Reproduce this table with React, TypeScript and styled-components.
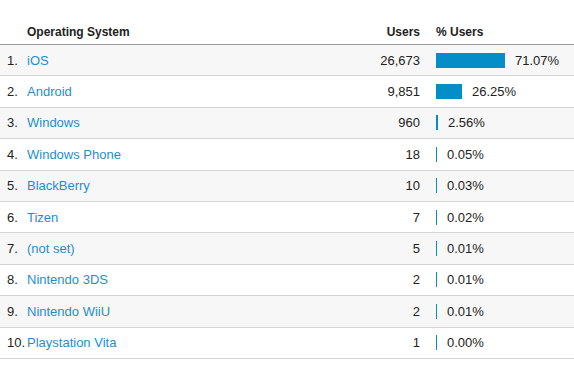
import styled, { createGlobalStyle } from "styled-components";

const GlobalStyle = createGlobalStyle`
  body {
    margin: 0;
    background: #fff;
    font-family: "Liberation Sans", Arial, sans-serif;
    color: #222;
  }
`;

const Table = styled.div`
  width: 574px;
`;

const HeaderRow = styled.div`
  display: flex;
  align-items: flex-end;
  height: 45px;
  box-sizing: border-box;
  padding: 0 0 5px 7px;
  border-bottom: 1px solid #9a9a9a;
  font-size: 12px;
  font-weight: bold;
  color: #222;
`;

const Row = styled.div<{ $shaded: boolean }>`
  display: flex;
  align-items: center;
  height: 31.4px;
  box-sizing: border-box;
  padding-left: 7px;
  border-bottom: 1px solid #d4d4d4;
  background: ${(p) => (p.$shaded ? "#f7f7f7" : "#fff")};
  font-size: 13px;
`;

const Index = styled.div`
  width: 20px;
  flex: none;
  white-space: nowrap;
`;

const Name = styled.div`
  flex: 1;
  white-space: nowrap;
`;

const NameLink = styled.a`
  color: #1d8fcf;
  text-decoration: none;
`;

const Users = styled.div`
  width: 120px;
  flex: none;
  text-align: right;
`;

const Percent = styled.div`
  width: 138px;
  margin-left: 16px;
  flex: none;
  display: flex;
  align-items: center;
`;

const Bar = styled.div`
  height: 15px;
  min-width: 1px;
  background: #058dc7;
  margin-right: 10px;
`;

// bar: pixel width of the share bar (max ~97px)
const rows = [
  { name: "iOS", users: "26,673", pct: "71.07", bar: 69 },
  { name: "Android", users: "9,851", pct: "26.25", bar: 26 },
  { name: "Windows", users: "960", pct: "2.56", bar: 2 },
  { name: "Windows Phone", users: "18", pct: "0.05", bar: 1 },
  { name: "BlackBerry", users: "10", pct: "0.03", bar: 1 },
  { name: "Tizen", users: "7", pct: "0.02", bar: 1 },
  { name: "(not set)", users: "5", pct: "0.01", bar: 1 },
  { name: "Nintendo 3DS", users: "2", pct: "0.01", bar: 1 },
  { name: "Nintendo WiiU", users: "2", pct: "0.01", bar: 1 },
  { name: "Playstation Vita", users: "1", pct: "0.00", bar: 1 },
];

export default function App() {
  return (
    <>
      <GlobalStyle />
      <Table>
        <HeaderRow>
          <Index />
          <Name>Operating System</Name>
          <Users>Users</Users>
          <Percent>% Users</Percent>
        </HeaderRow>
        {rows.map((r, i) => (
          <Row key={r.name} $shaded={i % 2 === 0}>
            <Index>{i + 1}.</Index>
            <Name>
              <NameLink href="#">{r.name}</NameLink>
            </Name>
            <Users>{r.users}</Users>
            <Percent>
              <Bar style={{ width: r.bar + "px" }} />
              {r.pct}%
            </Percent>
          </Row>
        ))}
      </Table>
    </>
  );
}
